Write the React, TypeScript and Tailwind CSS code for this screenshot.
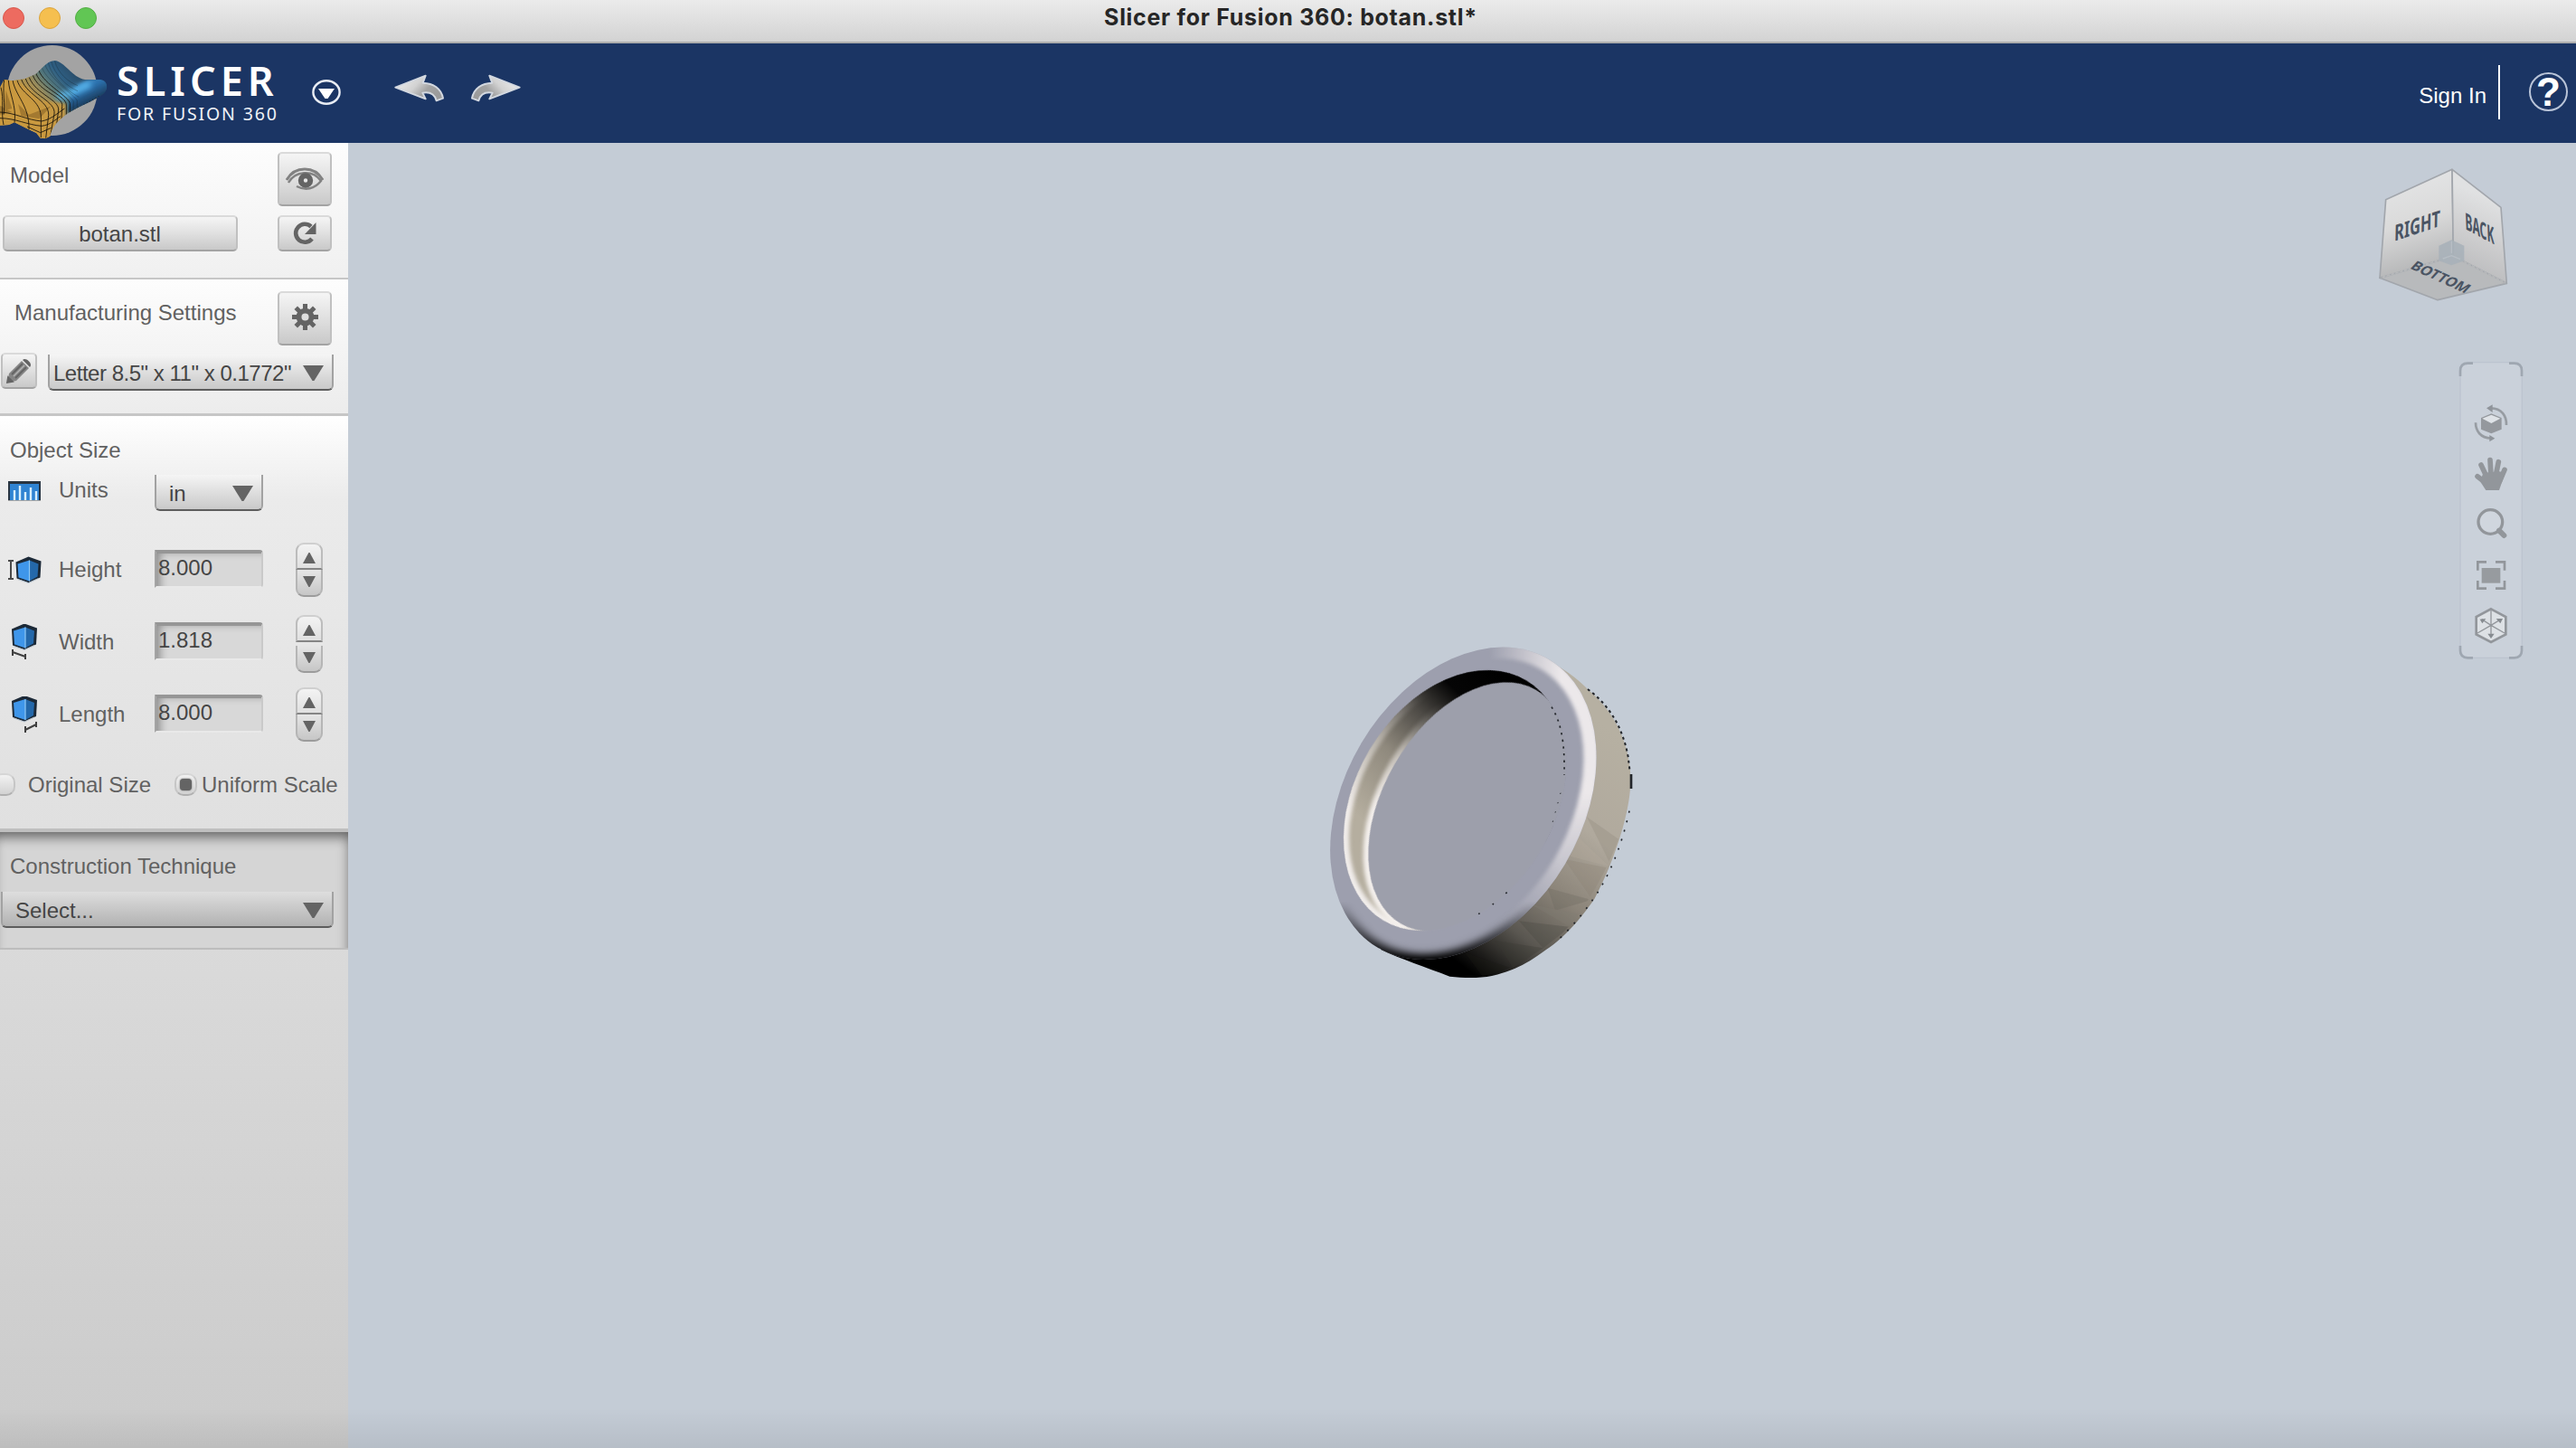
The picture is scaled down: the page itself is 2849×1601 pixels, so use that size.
import React from 'react';

const raised =
  'rounded-[5px] border-2 border-t-[#dadada] border-x-[#c0c0c0] border-b-[#a3a3a3] bg-linear-to-b from-[#f5f5f5] via-[#e0e0e0] to-[#c9c9c9]';

function TitleBar() {
  return (
    <div className="relative flex h-12 shrink-0 items-center border-b-2 border-[#adadad] bg-linear-to-b from-[#ebebeb] to-[#d3d3d3]">
      <div className="flex h-full items-start gap-4 pt-2 pl-[3px]">
        <div className="size-6 rounded-full border border-[#d8574c] bg-[#ed6b60]" />
        <div className="size-6 rounded-full border border-[#dba43d] bg-[#f5bf4f]" />
        <div className="size-6 rounded-full border border-[#53ae44] bg-[#61c654]" />
      </div>
      <div className="absolute inset-x-0 top-[3px] pl-[6px] text-center font-['Inter'] text-[25px] leading-[32px] font-bold tracking-[0.7px] text-[#262626]">
        Slicer for Fusion 360: botan.stl*
      </div>
    </div>
  );
}

function Logo() {
  return (
    <svg className="h-[110px] w-[122px] shrink-0" viewBox="0 144 366 330">
      <defs>
        <linearGradient id="wave" x1="90" y1="350" x2="250" y2="215" gradientUnits="userSpaceOnUse">
          <stop offset="0" stopColor="#c9993f" />
          <stop offset="0.3" stopColor="#a08e58" />
          <stop offset="0.5" stopColor="#56787a" />
          <stop offset="0.7" stopColor="#2f6084" />
          <stop offset="1" stopColor="#27455f" />
        </linearGradient>
        <linearGradient id="tip" x1="270" y1="262" x2="310" y2="345" gradientUnits="userSpaceOnUse">
          <stop offset="0" stopColor="#3f8fce" />
          <stop offset="0.4" stopColor="#2b6eaa" />
          <stop offset="1" stopColor="#17304b" />
        </linearGradient>
        <filter id="logoSoft5"><feGaussianBlur stdDeviation="5" /></filter>
        <filter id="logoGlow" x="-30%" y="-60%" width="160%" height="220%"><feGaussianBlur stdDeviation="10" /></filter>
        <clipPath id="waveClip">
          <path d="M0 290L14 264L40 268L80 262L118 246C145 222 158 202 182 201C212 202 240 258 282 264L334 264C358 268 362 296 342 312C310 336 262 352 222 378C194 398 172 420 166 452L150 460L134 458L120 440L96 430L48 406L30 414L0 416Z" />
        </clipPath>
      </defs>
      <circle cx="173" cy="300" r="150" fill="#a3a3a3" />
      <g clipPath="url(#waveClip)">
        <rect y="190" width="366" height="290" fill="url(#wave)" />
        <path d="M250 290C270 270 300 262 340 258L370 280L350 320C315 340 270 350 226 376C222 350 235 310 250 290Z" fill="url(#tip)" filter="url(#logoSoft5)" />
        <path d="M190 322C225 318 262 294 300 278" fill="none" stroke="#5cbcf2" strokeWidth="20" filter="url(#logoGlow)" />
        <path d="M0 260L40 262L90 290L130 330L220 345L215 390L160 470H0Z" fill="#c9993f" opacity="0.85" filter="url(#logoSoft5)" />
        <path d="M60 345L96 380L170 352L130 394L70 384ZM20 300L40 360L14 366ZM0 350L40 372L0 380Z" fill="#8a6426" opacity="0.6" />
        <g fill="none" stroke="#17130c" strokeWidth="2.6">
          <path d="M3 290C14 330 2 370 12 414M14 264C8 300 18 350 12 380" />
          <path d="M28 266C30 310 56 350 48 408M42 266C52 320 98 350 96 430" />
          <path d="M57 266C72 318 140 330 136 396V456M71 263C92 322 172 334 160 392L152 458" />
          <path d="M85 261C104 318 186 334 180 378L168 446" />
          <path d="M97 257C120 314 198 330 194 366L188 412" />
          <path d="M109 250C130 306 212 320 206 352L204 394" />
          <path d="M119 243C140 296 220 318 220 348V382" />
          <path d="M129 234C146 280 232 322 232 344V373" />
          <path d="M0 372C50 374 90 398 138 402C170 396 190 376 214 360M0 392C50 392 90 414 138 418C168 414 182 398 200 386M90 420L134 440L170 424" />
        </g>
        <g fill="none" stroke="#14232e" strokeWidth="1.6" opacity="0.6">
          <path d="M140 226C156 270 242 322 244 338V366" />
          <path d="M150 215C164 262 250 318 256 334V360" />
          <path d="M160 207C170 254 220 300 262 322" />
          <path d="M170 203C180 246 220 286 258 302" />
          <path d="M182 203C192 242 226 272 258 284" />
        </g>
        <path d="M240 370L330 322" stroke="#241f18" strokeWidth="10" strokeDasharray="3 8" opacity="0.6" />
      </g>
    </svg>
  );
}

function HistoryArrow({ id, className }: { id: string; className: string }) {
  return (
    <svg className={className} viewBox="0 0 168 96">
      <defs>
        <linearGradient id={id} x1="0" y1="0" x2="1" y2="0.5">
          <stop offset="0" stopColor="#f4f4f4" />
          <stop offset="0.5" stopColor="#d2d2d2" />
          <stop offset="0.75" stopColor="#a3a3a3" />
          <stop offset="1" stopColor="#9b9b9b" />
        </linearGradient>
      </defs>
      <path d="M4 44L104 5L95 29C130 30 156 48 162 80L140 88C134 66 118 58 94 62L104 82Z" fill={`url(#${id})`} stroke="#d3d8e0" strokeWidth="6" strokeLinejoin="round" />
    </svg>
  );
}

function Header() {
  return (
    <header className="flex h-[110px] shrink-0 bg-[#1b3564]">
      <Logo />
      <div className="flex w-[200px] flex-col pl-[7px] font-['Noto_Sans'] whitespace-nowrap text-white">
        <div className="mt-[15px] h-[53px] text-[45px] leading-[52px] font-semibold tracking-[5px]">SLICER</div>
        <div className="h-6 text-[19.5px] leading-[20px] font-normal tracking-[1.85px] text-[#f0f3f8]">FOR FUSION 360</div>
      </div>
      <svg className="mt-[39px] ml-[22px] h-[30px] w-[34px]" viewBox="0 0 34 30">
        <ellipse cx="17" cy="15" rx="14.6" ry="12.7" fill="none" stroke="#e9edf4" strokeWidth="2.4" />
        <path d="M8 11H26L18.5 22H15.5Z" fill="#fff" />
      </svg>
      <HistoryArrow id="undo" className="mt-[34px] ml-[58px] h-8 w-14" />
      <HistoryArrow id="redo" className="mt-[34px] ml-[28px] h-8 w-14 -scale-x-100" />
      <div className="ml-auto flex">
        <div className="mt-[44px] font-['Liberation_Sans'] text-[24px] leading-[28px] whitespace-nowrap text-white">Sign In</div>
        <div className="mt-6 ml-[13px] h-[60px] w-0.5 bg-white" />
        <div className="mt-8 mr-[9px] ml-[32px] flex size-[43px] items-center justify-center rounded-full border-2 border-[#b9c4d8] font-['Liberation_Sans'] text-[44px] leading-none font-bold text-white">
          ?
        </div>
      </div>
    </header>
  );
}

function Caret({ up = false, className }: { up?: boolean; className: string }) {
  return (
    <svg className={className} viewBox="0 0 24 18" preserveAspectRatio="none">
      <path d={up ? 'M0 18L11 0H13L24 18Z' : 'M0 0H24L13 18H11Z'} fill="#646464" />
    </svg>
  );
}

function Dropdown({ label, className, dark = false }: { label: string; className: string; dark?: boolean }) {
  return (
    <div
      className={`flex h-10 items-start justify-between rounded-b-[6px] border-b-2 border-b-[#5d5d5d] border-x-2 border-x-[#a2a2a2] bg-linear-to-b pr-[9px] text-[#454545] ${
        dark ? 'from-[#dedede] to-[#b2b2b2]' : 'from-[#f5f5f5] to-[#c9c9c9]'
      } ${className}`}
    >
      <span className="mt-[7px] whitespace-nowrap">{label}</span>
      <Caret className="mt-3 h-[17px] w-[23px] shrink-0" />
    </div>
  );
}

function Cube() {
  return (
    <g>
      <path d="M1 6L15 0L29 5L28 23L15 29L2 24Z" fill="#1c2937" />
      <path d="M3 8L16 4V27L4 23Z" fill="#3f96ea" />
      <path d="M16 4L26 8L25 22L16 27Z" fill="#2468aa" />
      <path d="M16 4V27" stroke="#8fc8f5" strokeWidth="1.2" />
      <path d="M3 25L15 29L26 24" stroke="#b8c4cf" fill="none" />
    </g>
  );
}

function DimensionIcon({ kind }: { kind: string }) {
  return (
    <svg className="h-10 w-[38px] shrink-0" viewBox="0 0 38 40">
      {kind === 'Height' && (
        <g>
          <g transform="translate(8.5 5.5)"><Cube /></g>
          <path d="M1 10H7M1 30H7M4 10V30" stroke="#4a4a4a" strokeWidth="2" />
        </g>
      )}
      {kind === 'Width' && (
        <g>
          <g transform="translate(4 -0.5)"><Cube /></g>
          <path d="M6 28V35M20 33V39M6 31L20 36" stroke="#3f3f3f" strokeWidth="2" />
        </g>
      )}
      {kind === 'Length' && (
        <g>
          <g transform="translate(4 -1)"><Cube /></g>
          <path d="M20 33V40M32 28V34M20 37L32 31" stroke="#3f3f3f" strokeWidth="2" />
        </g>
      )}
    </svg>
  );
}

function DimensionRow({ name, value, gap = false }: { name: string; value: string; gap?: boolean }) {
  return (
    <div className="flex h-20 items-start pl-[8px]">
      <div className="mt-[10px]"><DimensionIcon kind={name} /></div>
      <div className="mt-4 ml-[19px] w-[106px]">{name}</div>
      <div className="mt-2 h-[42px] w-[120px] rounded-r-[4px] border-2 border-t-4 border-t-[#969696] border-r-[#c9c9c9] border-b-[#e9e9e9] border-l-[#a4a4a4] bg-[#d8d8d8] pl-0.5 text-[#454545] shadow-[inset_10px_4px_10px_-6px_#8d8d8d]">
        <div className="mt-0.5">{value}</div>
      </div>
      <div className={`ml-9 flex w-[30px] flex-col ${gap ? 'gap-1' : ''}`}>
        <div className="flex h-[30px] items-center justify-center rounded-t-[9px] border-2 border-x-[#bcbcbc] border-t-[#cfcfcf] border-b-[#858585] bg-linear-to-b from-[#f3f3f3] to-[#e0e0e0] pt-1">
          <Caret up className="h-3 w-3.5" />
        </div>
        <div className="flex h-[30px] items-center justify-center rounded-b-[9px] border-2 border-t-0 border-x-[#b5b5b5] border-b-[#9c9c9c] bg-linear-to-b from-[#e6e6e6] to-[#c6c6c6] pb-0.5">
          <Caret className="h-3 w-3.5" />
        </div>
      </div>
    </div>
  );
}

function Radio({ checked = false, className = '' }: { checked?: boolean; className?: string }) {
  return (
    <div className={`flex size-[25px] shrink-0 items-center justify-center rounded-[10px] border-2 border-t-[#d6d6d6] border-x-[#c6c6c6] border-b-[#b0b0b0] bg-linear-to-b from-[#f2f2f2] to-[#d2d2d2] ${className}`}>
      {checked && <div className="size-[13px] rounded-[4px] bg-[#646464] shadow-[0_0_2px_#646464]" />}
    </div>
  );
}

function Sidebar() {
  return (
    <aside className="flex w-[385px] shrink-0 flex-col overflow-hidden bg-linear-to-b from-[#f2f2f2] to-[#cbcbcb] font-['Liberation_Sans'] text-[24px] leading-[28px] text-[#616161]">
      <section className="h-[151px] shrink-0 border-b-2 border-[#c6c6c6] bg-linear-to-b from-[#fdfdfd] to-[#f0f0f0]">
        <div className="flex h-20 justify-between pr-[18px] pl-[11px]">
          <span className="mt-[22px]">Model</span>
          <div className={`mt-2.5 flex size-[60px] items-center justify-center ${raised}`}>
            <svg className="h-[26px] w-[42px]" viewBox="0 0 42 26" fill="none">
              <path d="M1 14C10 -2 32 -2 41 14" stroke="#828282" strokeWidth="3" />
              <path d="M3 17C10 4 30 2 39 15C32 24 22 26 12 21" stroke="#828282" strokeWidth="2.4" />
              <circle cx="22" cy="14.5" r="5.2" stroke="#646464" strokeWidth="6" fill="#e8e8e8" />
            </svg>
          </div>
        </div>
        <div className="flex h-10 justify-between pr-[18px] pl-[3px]">
          <div className={`flex h-10 w-[260px] justify-center pt-[5px] pr-px text-[#454545] ${raised}`}>botan.stl</div>
          <div className={`flex h-10 w-[60px] items-center justify-center ${raised}`}>
            <svg className="h-[26px] w-7" viewBox="0 0 28 26">
              <path d="M21 5.5A10 10 0 1 0 22 19" stroke="#646464" strokeWidth="4.6" fill="none" />
              <path d="M26.5 1V14H14Z" fill="#646464" />
            </svg>
          </div>
        </div>
      </section>

      <section className="h-[151px] shrink-0 border-b-[3px] border-[#c6c6c6] bg-linear-to-b from-[#fdfdfd] to-[#ececec]">
        <div className="flex h-20 justify-between pr-[18px] pl-4">
          <span className="mt-[23px]">Manufacturing Settings</span>
          <div className={`mt-[13px] flex size-[60px] shrink-0 items-center justify-center ${raised}`}>
            <svg className="mb-1 size-[29px]" viewBox="-15 -15 30 30">
              {[0, 45, 90, 135].map((a) => (
                <rect key={a} x="-2.6" y="-15" width="5.2" height="30" fill="#646464" transform={`rotate(${a})`} />
              ))}
              <circle r="7.2" fill="#dedede" stroke="#646464" strokeWidth="6" />
            </svg>
          </div>
        </div>
        <div className="flex pl-px">
          <div className={`mt-px flex size-10 shrink-0 items-center justify-center ${raised}`}>
            <svg className="size-[30px]" viewBox="0 0 30 30">
              <path d="M2 28L4 18L18 4L26 12L12 26Z" fill="#858585" />
              <path d="M19 3C22 -1 31 7 27 11Z" fill="#646464" />
              <path d="M2 28L3 22L8 27ZM7 19L19 7M11 23L23 11" stroke="#646464" strokeWidth="1.8" fill="#646464" />
              <path d="M9 21L21 9" stroke="#b5b5b5" strokeWidth="1.2" />
            </svg>
          </div>
          <Dropdown label={'Letter 8.5" x 11" x 0.1772"'} className="mt-[3px] ml-3 w-[316px] pl-[4px] tracking-[-0.48px]" />
        </div>
      </section>

      <section className="h-[460px] shrink-0 border-b-4 border-[#bfbfbf] bg-linear-to-b from-[#ffffff] via-[#ebebeb] via-20% to-[#e0e0e0]">
        <div className="h-[60px] pt-6 pl-[11px]">Object Size</div>
        <div className="flex h-20 items-start pl-[9px]">
          <svg className="mt-3 h-[22px] w-9 shrink-0" viewBox="0 0 36 22">
            <rect width="36" height="22" fill="#283441" />
            <rect x="2" y="3" width="32" height="18" fill="#2f83d2" />
            <path d="M7 10V21M13 5V21M19 12V21M25 7V21M31 11V21" stroke="#d8efff" strokeWidth="2.4" />
            <path d="M0 21.5H36" stroke="#a5a5a5" />
          </svg>
          <div className="mt-2 ml-5 w-[106px]">Units</div>
          <Dropdown label="in" className="mt-[5px] w-[120px] pl-[14px]" />
        </div>
        <DimensionRow name="Height" value="8.000" />
        <DimensionRow name="Width" value="1.818" gap />
        <DimensionRow name="Length" value="8.000" />
        <div className="flex pt-[14px]">
          <Radio className="-ml-2 mt-px" />
          <span className="ml-3.5 w-[162px]">Original Size</span>
          <Radio checked className="mt-px" />
          <span className="ml-[5px] whitespace-nowrap">Uniform Scale</span>
        </div>
      </section>

      <section className="h-[130px] shrink-0 border-b-2 border-[#bdbdbd] bg-[#d5d5d5] pl-px shadow-[inset_-3px_10px_14px_-5px_#5e5e5e]">
        <div className="h-[66px] pt-6 pl-[10px]">Construction Technique</div>
        <Dropdown dark label="Select..." className="w-[368px] pl-3.5" />
      </section>
    </aside>
  );
}

function Model() {
  return (
    <svg className="absolute top-[532px] left-[1055px] h-[420px] w-[400px]" viewBox="0 0 1200 1260">
      <defs>
        <linearGradient id="side" x1="1060" y1="380" x2="470" y2="1160" gradientUnits="userSpaceOnUse">
          <stop offset="0" stopColor="#b6b0a2" />
          <stop offset="0.32" stopColor="#b0a99d" />
          <stop offset="0.55" stopColor="#8b8479" />
          <stop offset="0.74" stopColor="#595650" />
          <stop offset="0.87" stopColor="#1d1c1a" />
          <stop offset="0.94" stopColor="#000" />
        </linearGradient>
        <linearGradient id="wall" x1="660" y1="160" x2="190" y2="640" gradientUnits="userSpaceOnUse">
          <stop offset="0" stopColor="#000" />
          <stop offset="0.22" stopColor="#050505" />
          <stop offset="0.42" stopColor="#4e4b46" />
          <stop offset="0.66" stopColor="#8f897d" />
          <stop offset="1" stopColor="#b5ae9f" />
        </linearGradient>
        <linearGradient id="fadeRight" x1="620" y1="0" x2="860" y2="0" gradientUnits="userSpaceOnUse">
          <stop offset="0" stopColor="#000" />
          <stop offset="1" stopColor="#fff" />
        </linearGradient>
        <linearGradient id="fadeDown" x1="0" y1="560" x2="0" y2="1060" gradientUnits="userSpaceOnUse">
          <stop offset="0" stopColor="#000" stopOpacity="0" />
          <stop offset="1" stopColor="#000" />
        </linearGradient>
        <linearGradient id="showBottom" x1="0" y1="920" x2="0" y2="1110" gradientUnits="userSpaceOnUse">
          <stop offset="0" stopColor="#000" />
          <stop offset="1" stopColor="#fff" />
        </linearGradient>
        <linearGradient id="fadeLeft" x1="330" y1="0" x2="480" y2="0" gradientUnits="userSpaceOnUse">
          <stop offset="0" stopColor="#fff" />
          <stop offset="1" stopColor="#000" />
        </linearGradient>
        <linearGradient id="fadeTop" x1="0" y1="220" x2="0" y2="620" gradientUnits="userSpaceOnUse">
          <stop offset="0" stopColor="#000" />
          <stop offset="1" stopColor="#000" stopOpacity="0" />
        </linearGradient>
        <mask id="rightMask" maskUnits="userSpaceOnUse" x="0" y="0" width="1200" height="1260">
          <rect width="1200" height="1260" fill="url(#fadeRight)" />
          <rect width="1200" height="1260" fill="url(#fadeDown)" />
        </mask>
        <mask id="bottomMask" maskUnits="userSpaceOnUse" x="0" y="0" width="1200" height="1260">
          <rect width="1200" height="1260" fill="url(#showBottom)" />
        </mask>
        <mask id="leftMask" maskUnits="userSpaceOnUse" x="0" y="0" width="1200" height="1260">
          <rect width="1200" height="1260" fill="url(#fadeLeft)" />
          <rect width="1200" height="1260" fill="url(#fadeTop)" />
        </mask>
        <filter id="soft2" x="-20%" y="-20%" width="140%" height="140%"><feGaussianBlur stdDeviation="2" /></filter>
        <filter id="soft7" x="-20%" y="-20%" width="140%" height="140%"><feGaussianBlur stdDeviation="6" /></filter>
        <filter id="soft14" x="-20%" y="-20%" width="140%" height="140%"><feGaussianBlur stdDeviation="12" /></filter>
        <clipPath id="frontClip"><ellipse cx="535" cy="595" rx="556" ry="393" transform="rotate(-59.2 535 595)" /></clipPath>
        <clipPath id="rimClip"><ellipse cx="507" cy="585" rx="465" ry="331" transform="rotate(-59.2 507 585)" /></clipPath>
        <clipPath id="sideClip">
          <path d="M700 80C860 110 1080 250 1090 520C1090 700 950 960 810 1080C720 1150 600 1178 520 1172C450 1165 330 1110 270 1080L500 900L900 500Z" />
        </clipPath>
      </defs>
      <path d="M650 78C790 85 900 165 950 218C1050 300 1092 420 1090 520C1090 620 1040 780 970 912C910 1000 850 1055 810 1080C730 1140 680 1155 630 1167C590 1175 540 1175 490 1169C410 1138 330 1112 262 1080L220 900Z" fill="url(#side)" />
      <g clipPath="url(#sideClip)" opacity="0.3" filter="url(#soft2)">
        <path d="M945 640L1060 720L1030 810Z" fill="#8f877c" />
        <path d="M915 705L1020 805L890 770Z" fill="#b5aca0" />
        <path d="M870 780L1020 810L960 910Z" fill="#8a8175" />
        <path d="M815 875L960 915L840 950Z" fill="#6c675f" />
        <path d="M760 930L930 965L890 1005Z" fill="#837d74" />
        <path d="M720 985L890 1005L800 1075Z" fill="#47443f" />
        <path d="M640 1050L800 1075L700 1140Z" fill="#3a3733" />
        <path d="M540 1090L690 1140L600 1170Z" fill="#1b1a18" />
      </g>
      <g clipPath="url(#frontClip)">
        <rect width="1200" height="1260" fill="#9d9fae" />
        <g mask="url(#rightMask)">
          <ellipse cx="527" cy="598" rx="546" ry="384" transform="rotate(-59.2 527 598)" fill="none" stroke="#ece8ea" strokeWidth="50" filter="url(#soft7)" />
        </g>
        <g mask="url(#bottomMask)">
          <ellipse cx="535" cy="592" rx="562" ry="398" transform="rotate(-59.2 535 592)" fill="none" stroke="#000" strokeWidth="46" filter="url(#soft14)" />
        </g>
      </g>
      <g clipPath="url(#rimClip)">
        <rect width="1200" height="1260" fill="url(#wall)" />
        <path d="M850 330L900 300V900L400 1060L420 1000L840 700Z" fill="#9d9fab" />
        <g mask="url(#leftMask)">
          <ellipse cx="507" cy="585" rx="461" ry="327" transform="rotate(-59.2 507 585)" fill="none" stroke="#f1edeb" strokeWidth="32" filter="url(#soft7)" />
          <ellipse cx="550" cy="606" rx="448" ry="283" transform="rotate(-60 550 606)" fill="none" stroke="#f4f0ed" strokeWidth="30" filter="url(#soft7)" />
        </g>
        <ellipse cx="552" cy="606" rx="448" ry="283" transform="rotate(-60 552 606)" fill="#9d9fab" filter="url(#soft2)" />
      </g>
      <g fill="none">
        <ellipse cx="507" cy="585" rx="467" ry="333" transform="rotate(-59.2 507 585)" stroke="#9d9fae" strokeWidth="7" filter="url(#soft2)" />
      </g>
      <g fill="none" stroke="#22252a" strokeWidth="6">
        <path d="M828 275C862 330 872 400 870 500" strokeWidth="5" strokeDasharray="7 16" />
        <path d="M858 560L828 670" strokeWidth="3" strokeDasharray="4 28" />
        <path d="M680 890C630 935 600 955 560 976" strokeWidth="5" strokeDasharray="5 52" />
        <path d="M948 216C1010 262 1062 330 1082 440L1088 490" strokeDasharray="9 11" />
        <path d="M1092 498V546" strokeWidth="8" />
        <path d="M1086 620C1060 740 1015 845 966 912C930 965 880 1022 840 1056" strokeWidth="5" strokeDasharray="6 26" />
      </g>
    </svg>
  );
}

function ViewCube() {
  return (
    <svg className="absolute top-0.5 left-[2215px] h-[200px] w-[249px]" viewBox="0 0 747 600">
      <defs>
        <linearGradient id="faceL" x1="0" y1="0" x2="0.2" y2="1">
          <stop offset="0.1" stopColor="#e4e5e6" />
          <stop offset="0.55" stopColor="#dadada" />
          <stop offset="1" stopColor="#b5b6b7" />
        </linearGradient>
        <linearGradient id="faceR" x1="0.2" y1="0" x2="0" y2="1">
          <stop offset="0.15" stopColor="#e0e1e2" />
          <stop offset="0.5" stopColor="#cfcfd0" />
          <stop offset="1" stopColor="#b3b4b6" />
        </linearGradient>
      </defs>
      <g stroke="#a2a6ac" strokeWidth="5" strokeLinejoin="round">
        <path d="M116 182L336 82L340 370L96 442Z" fill="url(#faceL)" />
        <path d="M336 82L498 208L517 460L340 370Z" fill="url(#faceR)" />
        <path d="M96 442L340 370L517 460L288 515Z" fill="#b8babc" />
      </g>
      <path d="M100 440L340 370L513 458" fill="none" stroke="#b7b9bb" strokeWidth="6" />
      <path d="M100 440L340 370L513 458" fill="none" stroke="#a1a5ab" strokeWidth="3" strokeDasharray="5 10" />
      <path d="M292 335L334 316L376 335V385L334 400L292 385Z" fill="#a9b1b9" opacity="0.9" />
      <path d="M334 320V360M305 378L334 368L363 380" fill="none" stroke="#b7bec5" strokeWidth="4" />
      <g fill="#4a5463" fontFamily="Noto Sans, sans-serif" fontWeight="700">
        <text fontSize="74" textLength="152" lengthAdjust="spacingAndGlyphs" transform="matrix(1 -0.33 -0.02 1 144 320)">RIGHT</text>
        <text fontSize="78" textLength="96" lengthAdjust="spacingAndGlyphs" transform="matrix(1 0.53 0.04 1 380 280)">BACK</text>
        <text fontSize="60" textLength="200" lengthAdjust="spacingAndGlyphs" transform="matrix(0.93 0.42 -0.55 0.6 222 402) translate(-16 24)">BOTTOM</text>
      </g>
    </svg>
  );
}

function NavBar() {
  return (
    <svg className="absolute top-[222px] left-[2305px] h-[360px] w-[130px]" viewBox="0 0 390 1080">
      <rect x="93" y="62" width="205" height="980" rx="28" fill="#cad1da" stroke="#bcc4cf" strokeWidth="4" />
      <g fill="none" stroke="#9fa7b1" strokeWidth="8">
        <path d="M93 108V90Q93 65 118 65H135M255 65H272Q297 65 297 90V108M93 1002V1018Q93 1042 118 1042H135M255 1042H272Q297 1042 297 1018V1002" />
      </g>
      <g fill="none" stroke="#979ca2" strokeWidth="8">
        <path d="M195 214C230 214 247 240 246 270M195 314C160 312 144 290 144 262" />
      </g>
      <path d="M180 214L200 202V228ZM208 314L190 303V325Z" fill="#8f949a" />
      <path d="M162 246L196 232L230 246V284L196 298L162 284Z" fill="#94989d" />
      <path d="M166 248L196 236L226 248L196 264Z" fill="#dfe3e7" />
      <g stroke="#92969b" strokeLinecap="round" fill="none">
        <path d="M150 440L178 462M162 402L180 440M192 386L195 436M220 392L211 436M240 418L224 456" strokeWidth="17" />
      </g>
      <path d="M170 428L226 424L238 440L222 486H178L158 455Z" fill="#92969b" />
      <circle cx="193" cy="591" r="40" fill="#d0d6de" stroke="#92969b" strokeWidth="10" />
      <path d="M222 620L238 636" stroke="#92969b" strokeWidth="18" strokeLinecap="round" />
      <path d="M151 752V724H180M210 724H240V752M240 786V812H210M180 812H151V786" fill="none" stroke="#92969b" strokeWidth="8" />
      <rect x="164" y="744" width="62" height="50" fill="#979b9f" />
      <path d="M195 880L244 906V964L195 990L146 964V906Z" fill="#dde1e5" stroke="#92969b" strokeWidth="8" />
      <path d="M195 882V968M195 934L150 960M195 934L240 960M195 934L164 914M195 934L228 914" stroke="#92969b" strokeWidth="4" />
      <path d="M184 962H206L195 978ZM158 914L178 912L166 928ZM234 912L212 912L226 928Z" fill="#868b90" />
    </svg>
  );
}

function Viewport() {
  return (
    <main className="relative min-w-0 flex-1 overflow-hidden bg-[#c4ccd6]">
      <Model />
      <ViewCube />
      <NavBar />
    </main>
  );
}

export default function App() {
  return (
    <div className="relative flex h-[1601px] w-[2849px] flex-col overflow-hidden">
      <TitleBar />
      <Header />
      <div className="flex min-h-0 flex-1">
        <Sidebar />
        <Viewport />
      </div>
      <div className="absolute inset-x-0 bottom-0 h-11 bg-linear-to-b from-black/0 to-black/7" />
    </div>
  );
}
